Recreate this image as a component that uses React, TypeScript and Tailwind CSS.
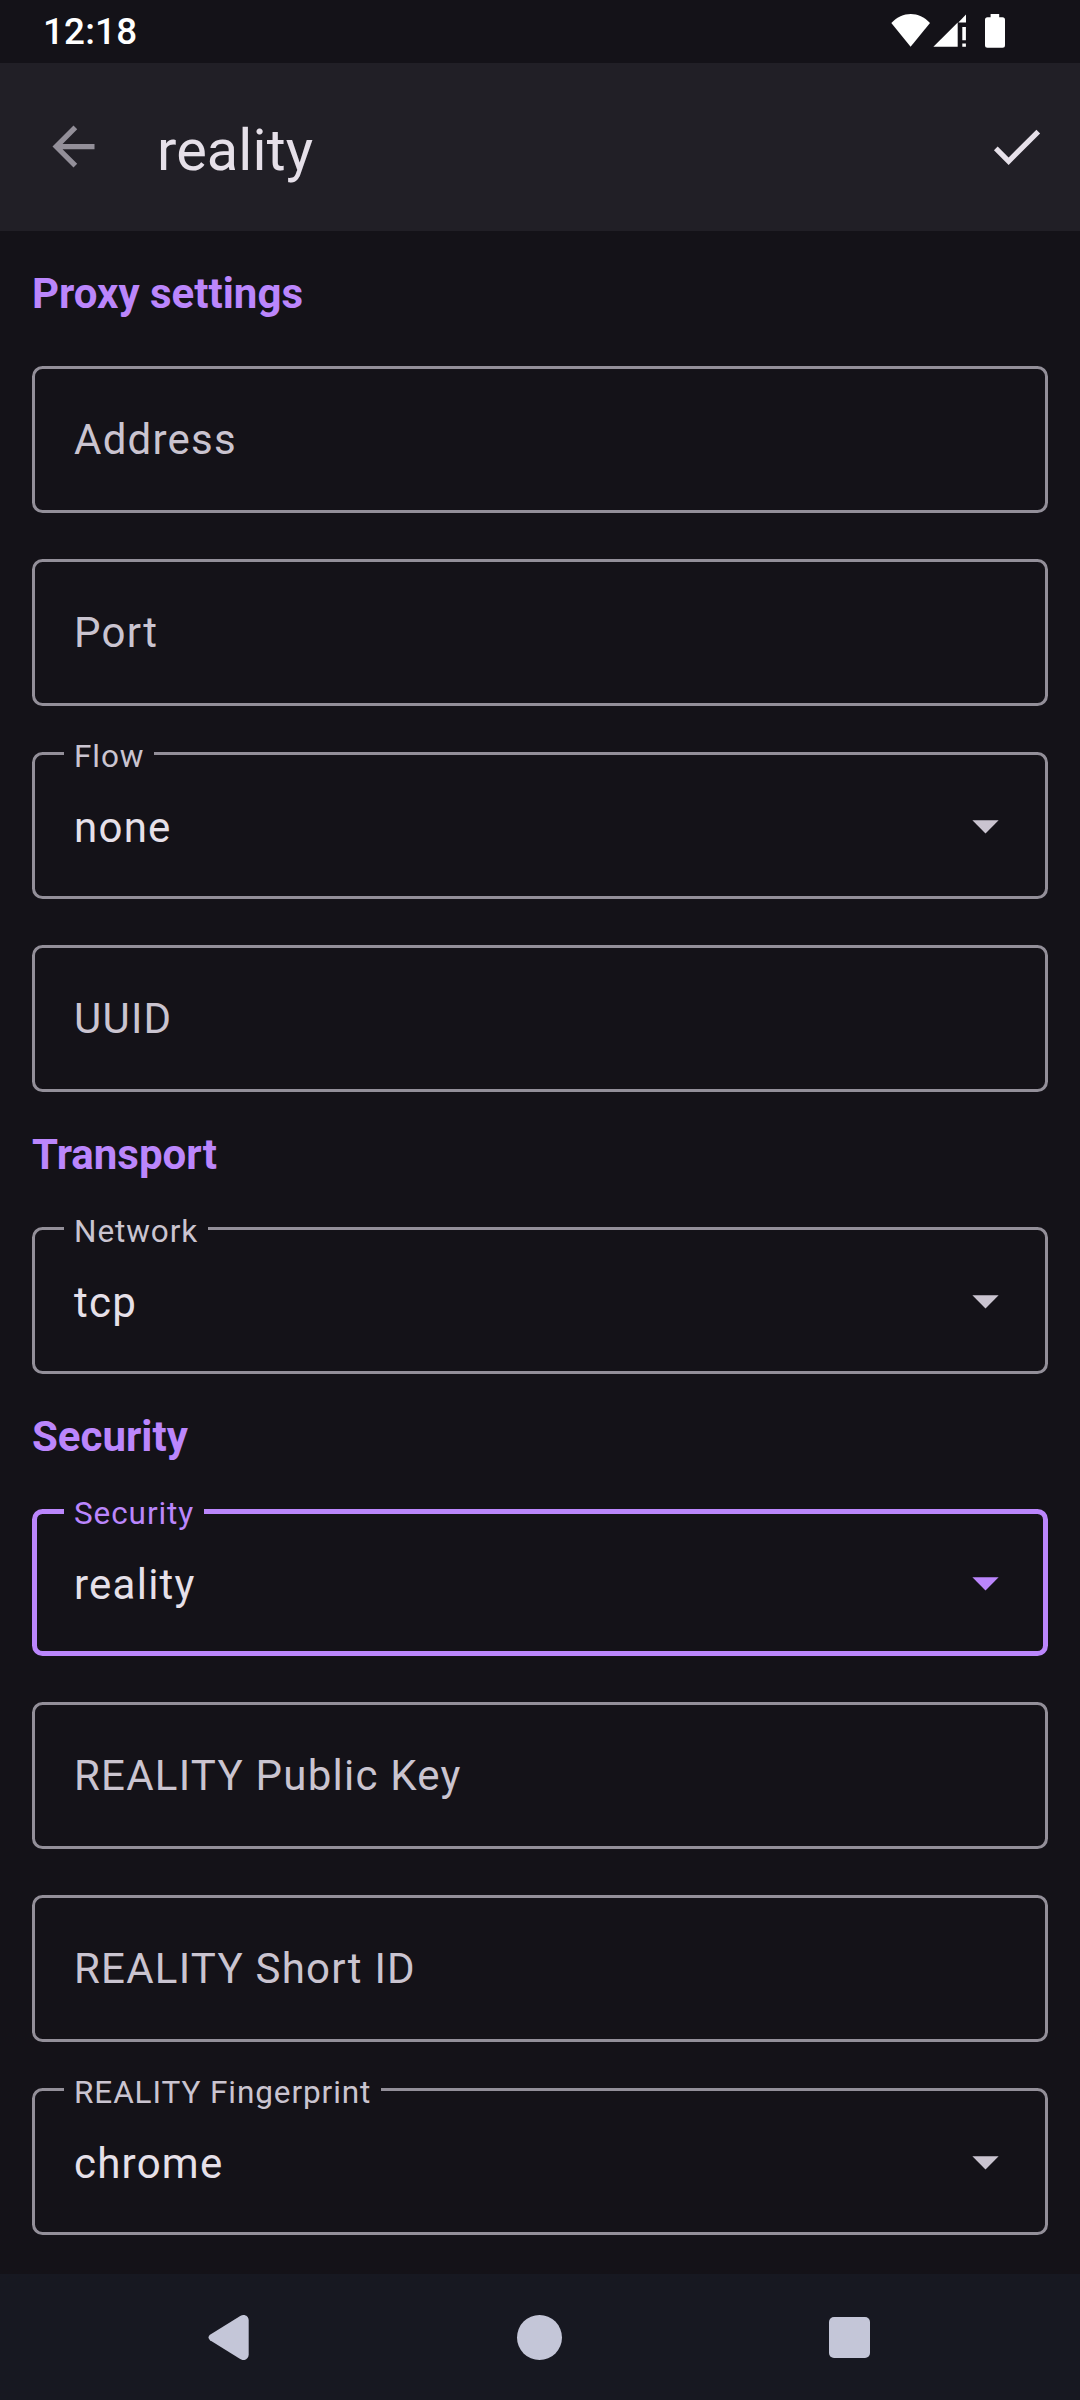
type FieldProps = {
  label: string;
  value?: string;
  focused?: boolean;
};

function SectionTitle({ children }: { children: string }) {
  return (
    <h2 className="h-[135px] pt-[38px] text-[42px] leading-[49px] font-bold text-[#bb86fc]">
      {children}
    </h2>
  );
}

/* Outlined text field; with a value it becomes a dropdown with a floating label. */
function Field({ label, value, focused = false }: FieldProps) {
  return (
    <div
      className={`relative flex h-[147px] items-center justify-between pr-[31px] pl-[42px] ${
        focused ? "text-[#bb86fc]" : "text-[#cac4d0]"
      }`}
    >
      <div
        className={`pointer-events-none absolute inset-0 rounded-[10.5px] ${
          focused ? "border-[5px] border-[#bb86fc]" : "border-[3px] border-[#938f99]"
        }`}
      />
      {value === undefined ? (
        <span className="text-[42px] leading-[49px] tracking-[1.24px]">{label}</span>
      ) : (
        <>
          <span className="absolute -top-[14px] left-[32px] bg-[#141218] pr-[9.5px] pl-[10px] text-[31.5px] leading-[37px] tracking-[0.91px] whitespace-nowrap">
            {label}
          </span>
          <span className="pt-1 text-[42px] leading-[49px] tracking-[1.24px] text-[#e6e0e9]">
            {value}
          </span>
          <svg className="size-[63px]" viewBox="0 0 24 24" fill="currentColor">
            <path d="M7 10l5 5 5-5z" />
          </svg>
        </>
      )}
    </div>
  );
}

function StatusBar() {
  return (
    <div className="flex h-[63px] items-start justify-between pr-[75px] pl-[43px] text-white">
      <span className="pt-[10px] text-[36.75px] leading-[43px] font-medium tracking-[0.2px]">
        12:18
      </span>
      <svg className="mt-[14px] h-[34px] w-[114px]" viewBox="891 14 114 34" fill="currentColor">
        <path d="M891.3 23C902.5 11 919 11 930 23L910.6 46.7z" />
        <path d="M933.4 46.8L957.7 22.4V46.8z" />
        <path d="M958.3 22.4L966 14.4V22.4z" />
        <path d="M962.3 27h3.6v13.3h-3.6zM962.3 43.6h3.6v3.2h-3.6z" />
        <path d="M990.6 14h8.6v3.2h3.3a2.5 2.5 0 0 1 2.5 2.5v25.6a2.5 2.5 0 0 1-2.5 2.5h-15a2.5 2.5 0 0 1-2.5-2.5V19.7a2.5 2.5 0 0 1 2.5-2.5h3.1z" />
      </svg>
    </div>
  );
}

function AppBar() {
  return (
    <header className="flex h-[168px] items-center bg-[#211f26] pr-8 pl-[42px]">
      <svg className="mb-px size-[63px] text-[#938f99]" viewBox="0 0 24 24" fill="currentColor">
        <path d="M20 11H7.83l5.59-5.59L12 4l-8 8 8 8 1.41-1.41L7.83 13H20v-2z" />
      </svg>
      <h1 className="ml-[52px] flex-1 pt-[6px] text-[57.75px] leading-[68px] tracking-[0.1px] text-[#e6e0e9]">
        reality
      </h1>
      <svg className="mb-[2px] size-[63px] text-[#e6e0e9]" viewBox="0 0 24 24" fill="currentColor">
        <path d="M9 16.17L4.83 12l-1.42 1.41L9 19 21 7l-1.41-1.41z" />
      </svg>
    </header>
  );
}

function NavigationBar() {
  return (
    <nav className="flex h-[126px] items-center justify-between bg-[#171821] pr-[210px] pl-[208px] text-[#c4c6d8]">
      <svg className="h-[46px] w-[41px]" viewBox="0 0 41 46" fill="currentColor">
        <path d="M2 20.8L32.2 1.9C36.2-.6 40.7 1.8 40.7 6.4V40.6C40.7 45.2 36.2 47.6 32.2 45.1L2 26.2Q-1 23.5 2 20.8z" />
      </svg>
      <div className="ml-px size-[45px] rounded-full bg-[#c4c6d8]" />
      <div className="size-[41px] rounded-[5px] bg-[#c4c6d8]" />
    </nav>
  );
}

export default function App() {
  return (
    <div className="flex h-[2400px] w-[1080px] flex-col overflow-hidden bg-[#141218] font-['Roboto',sans-serif]">
      <StatusBar />
      <AppBar />
      <main className="flex-1 px-8">
        <section>
          <SectionTitle>Proxy settings</SectionTitle>
          <div className="flex flex-col gap-[46px]">
            <Field label="Address" />
            <Field label="Port" />
            <Field label="Flow" value="none" />
            <Field label="UUID" />
          </div>
        </section>
        <section>
          <SectionTitle>Transport</SectionTitle>
          <Field label="Network" value="tcp" />
        </section>
        <section>
          <SectionTitle>Security</SectionTitle>
          <div className="flex flex-col gap-[46px]">
            <Field label="Security" value="reality" focused />
            <Field label="REALITY Public Key" />
            <Field label="REALITY Short ID" />
            <Field label="REALITY Fingerprint" value="chrome" />
          </div>
        </section>
      </main>
      <NavigationBar />
    </div>
  );
}
